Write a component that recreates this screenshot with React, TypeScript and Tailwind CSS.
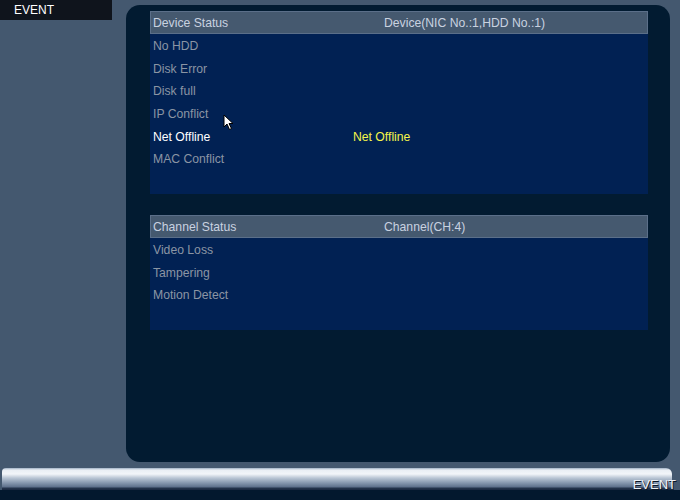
import React from "react";

type Row = { label: string; active?: boolean; value?: string };

const deviceRows: Row[] = [
  { label: "No HDD" },
  { label: "Disk Error" },
  { label: "Disk full" },
  { label: "IP Conflict" },
  { label: "Net Offline", active: true, value: "Net Offline" },
  { label: "MAC Conflict" },
];

const channelRows: Row[] = [
  { label: "Video Loss" },
  { label: "Tampering" },
  { label: "Motion Detect" },
];

function StatusTable({
  title,
  scope,
  rows,
  bodyHeight,
}: {
  title: string;
  scope: string;
  rows: Row[];
  bodyHeight: string;
}) {
  return (
    <div className="w-[498px]">
      <div className="flex h-[23px] items-center border border-[#5b6f89] bg-[#45596f] pt-[1px] text-[12.2px] text-[#c9d2e0]">
        <span className="w-[233px] pl-[2px]">{title}</span>
        <span>{scope}</span>
      </div>
      <div className={`${bodyHeight} bg-[#012153] pt-[1px]`}>
        {rows.map((r) => (
          <div key={r.label} className="flex h-[22.6px] items-center text-[12.2px]">
            <span
              className={`w-[203px] pl-[3px] ${r.active ? "text-white" : "text-[#8b95a4]"}`}
            >
              {r.label}
            </span>
            {r.value && <span className="text-[#f5f54a]">{r.value}</span>}
          </div>
        ))}
      </div>
    </div>
  );
}

function Cursor() {
  return (
    <svg
      className="absolute left-[223px] top-[114px]"
      width="11"
      height="17"
      viewBox="0 0 11 17"
    >
      <path
        d="M1 1 L1 13 L4 10 L6.5 15.5 L8.5 14.5 L6 9.5 L10 9.5 Z"
        fill="#ffffff"
        stroke="#000000"
        strokeWidth="1"
        strokeLinejoin="round"
      />
    </svg>
  );
}

export default function App() {
  return (
    <div
      className="relative flex h-[500px] w-[680px] flex-col overflow-hidden bg-[#44586f]"
      style={{ fontFamily: '"Liberation Sans", Arial, sans-serif' }}
    >
      <div className="flex h-[468px]">
        {/* side menu */}
        <div className="w-[126px] shrink-0">
          <div className="flex h-[20px] w-[112px] items-center bg-[#0f141c] pl-[14px] text-[12px] text-white">
            EVENT
          </div>
        </div>

        {/* main panel */}
        <div className="mt-[5px] flex h-[457px] w-[544px] flex-col gap-[21px] rounded-[14px] bg-[#021b31] pl-[24px] pt-[6px]">
          <StatusTable
            title="Device Status"
            scope="Device(NIC No.:1,HDD No.:1)"
            rows={deviceRows}
            bodyHeight="h-[160px]"
          />
          <StatusTable
            title="Channel Status"
            scope="Channel(CH:4)"
            rows={channelRows}
            bodyHeight="h-[92px]"
          />
        </div>
      </div>

      {/* bottom status bar */}
      <div className="relative h-[32px] bg-[#03182e]">
        <div className="h-[22px] bg-[#44586f]">
          <div className="ml-[2px] mr-[8px] h-[22px] rounded-tl-[4px] rounded-tr-[6px] bg-[linear-gradient(to_bottom,#9fb0c4_0px,#e9eef4_2px,#f2f5f9_6px,#b9c5d4_10px,#8596ad_15px,#5d6f8a_19px,#26354d_20px,#1a2840_22px)]" />
        </div>
        <span className="absolute right-[4px] top-[10px] text-[13px] leading-none text-[#eef2f7] [text-shadow:1px_1px_0_#0b1626]">
          EVENT
        </span>
      </div>

      <Cursor />
    </div>
  );
}
